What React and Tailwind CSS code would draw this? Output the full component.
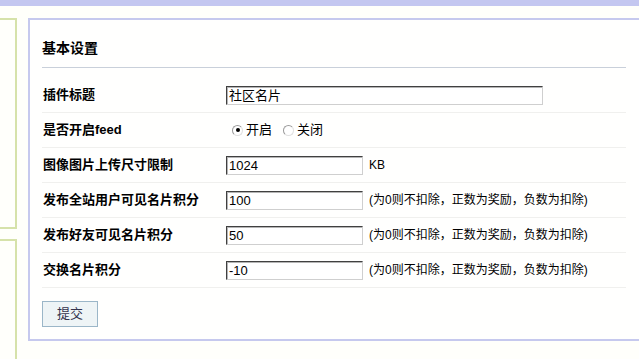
const FONT = { fontFamily: '"Liberation Sans", "Noto Sans CJK SC", sans-serif' }

function TextInput({ value, wide }) {
    return (
        <div
            className={`h-[19px] ${wide ? 'w-[317px]' : 'w-[137px]'} flex items-center pl-[2px] text-[13px] leading-none text-black bg-white border border-[#cfcfcf] border-t-[#404040] border-l-[#404040] shadow-[inset_1px_1px_0_#b5b5b5]`}
        >
            {value}
        </div>
    )
}

function Radio({ checked }) {
    return (
        <span className="relative inline-block w-[11px] h-[11px] rounded-full border border-[#9a9a9a] border-b-[#e0e0e0] border-r-[#e0e0e0] bg-white">
            {checked && <span className="absolute left-[2.5px] top-[2.5px] w-[4px] h-[4px] rounded-full bg-black" />}
        </span>
    )
}

function Hint() {
    return <span className="ml-[6px] text-[12px] text-black">(为0则不扣除，正数为奖励，负数为扣除)</span>
}

export default function App() {
    const rows = [
        { label: '插件标题', field: <TextInput value="社区名片" wide /> },
        {
            label: '是否开启feed',
            field: (
                <div className="flex items-center text-[13px] text-black pl-[6px]">
                    <Radio checked />
                    <span className="ml-[3px]">开启</span>
                    <span className="ml-[11px] flex"><Radio /></span>
                    <span className="ml-[3px]">关闭</span>
                </div>
            ),
        },
        {
            label: '图像图片上传尺寸限制',
            field: (
                <>
                    <TextInput value="1024" />
                    <span className="ml-[6px] text-[12px] text-black">KB</span>
                </>
            ),
        },
        { label: '发布全站用户可见名片积分', field: <><TextInput value="100" /><Hint /></> },
        { label: '发布好友可见名片积分', field: <><TextInput value="50" /><Hint /></> },
        { label: '交换名片积分', field: <><TextInput value="-10" /><Hint /></> },
    ]

    return (
        <div className="w-[639px] h-[359px] overflow-hidden bg-[#fffffb]" style={FONT}>
            <div className="h-[6px] bg-[#c4c7f0]" />
            <div className="flex pt-[12px]">
                {/* left sidebar boxes */}
                <div className="w-[17px] shrink-0 flex flex-col gap-[10px]">
                    <div className="h-[211px] border-2 border-l-0 border-[#d6e2aa]" />
                    <div className="h-[200px] border-2 border-l-0 border-b-0 border-[#d6e2aa]" />
                </div>

                {/* main panel */}
                <div className="ml-[11px] w-[700px] h-[323px] shrink-0 border-2 border-[#c6c9ee] bg-[#fffffe] pl-[12px] pr-[100px]">
                    <div className="h-[48px] flex items-center border-b border-[#c9d0da]">
                        <h2 className="text-[14px] font-bold text-black pt-[10px]">基本设置</h2>
                    </div>
                    <div className="mt-[10px]">
                        {rows.map((row) => (
                            <div key={row.label} className="h-[35px] flex items-center border-b border-[#f0f0ee]">
                                <div className="w-[184px] pl-[1px] text-[13px] font-bold text-black">{row.label}</div>
                                <div className="flex items-center">{row.field}</div>
                            </div>
                        ))}
                    </div>
                    <button className="mt-[13px] w-[56px] h-[26px] text-[13px] text-[#33334d] bg-[#eef4f6] border border-[#9bb6c8]">
                        提交
                    </button>
                </div>
            </div>
        </div>
    )
}
